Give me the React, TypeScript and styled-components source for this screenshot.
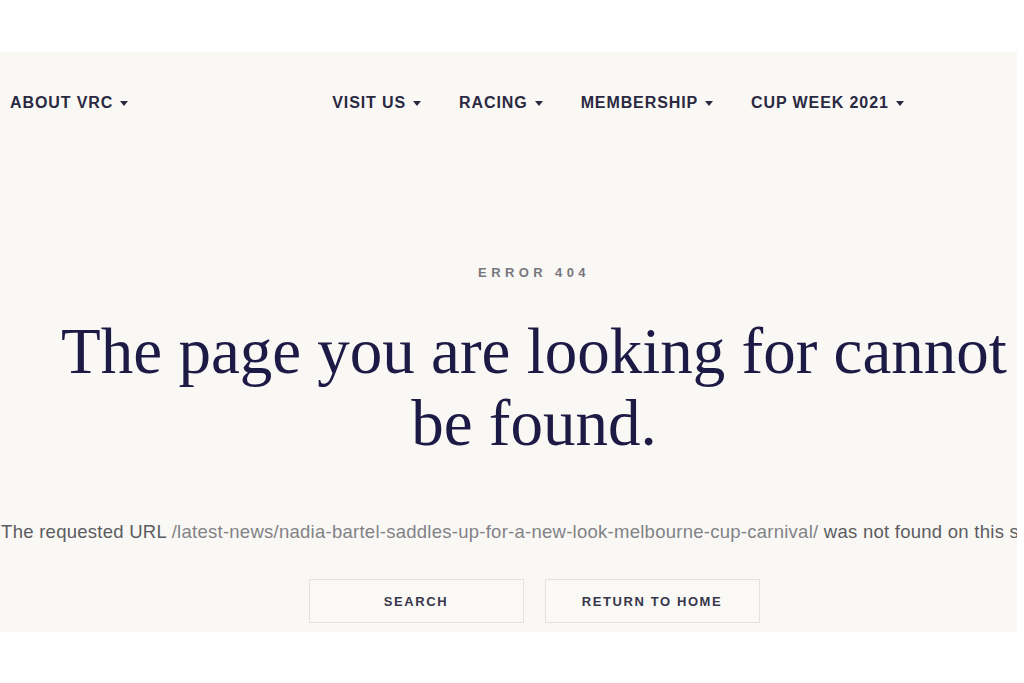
import styled, { createGlobalStyle } from 'styled-components';

const GlobalStyle = createGlobalStyle`
  html, body {
    margin: 0;
    padding: 0;
    background: #ffffff;
  }
  * {
    box-sizing: border-box;
  }
`;

const Page = styled.div`
  padding-top: 52px;
  height: 683px;
  background: #ffffff;
`;

const Panel = styled.section`
  width: 1017px;
  height: 580px;
  background: #f9f8f4;
  overflow: hidden;
  display: flex;
  flex-direction: column;
`;

const Nav = styled.nav`
  height: 102px;
  display: flex;
  align-items: center;
  padding-left: 10px;
`;

const NavGroup = styled.div`
  display: flex;
  align-items: center;
  gap: 38px;
  margin-left: 204px;
`;

const NavItem = styled.a`
  display: flex;
  align-items: center;
  gap: 7px;
  font-family: 'Liberation Sans', Arial, sans-serif;
  font-weight: 700;
  font-size: 16px;
  letter-spacing: 0.9px;
  color: #2b2942;
  text-decoration: none;
  cursor: pointer;
`;

const Caret = styled.span`
  width: 0;
  height: 0;
  border-left: 4px solid transparent;
  border-right: 4px solid transparent;
  border-top: 5px solid #2b2942;
  margin-top: 1px;
`;

const Main = styled.main`
  display: flex;
  flex-direction: column;
  align-items: center;
  padding-left: 51px;
`;

const Eyebrow = styled.div`
  margin-top: 111px;
  font-family: 'Liberation Sans', Arial, sans-serif;
  font-weight: 700;
  font-size: 13px;
  line-height: 16px;
  letter-spacing: 4.4px;
  color: #78777f;
`;

const Headline = styled.h1`
  margin: 34px 0 0;
  font-family: 'Liberation Serif', 'Times New Roman', serif;
  font-weight: 400;
  font-size: 65px;
  line-height: 72px;
  text-align: center;
  color: #1d1a46;
  white-space: nowrap;
`;

const UrlRow = styled.div`
  margin-top: 61px;
  width: 100%;
  display: flex;
  justify-content: center;
`;

const UrlText = styled.p`
  margin: 0;
  flex-shrink: 0;
  white-space: nowrap;
  font-family: 'Liberation Sans', Arial, sans-serif;
  font-size: 18.5px;
  letter-spacing: 0.26px;
  line-height: 24px;
  color: #5c5c5f;
`;

const UrlPath = styled.span`
  color: #828287;
`;

const Actions = styled.div`
  margin-top: 35px;
  display: flex;
  gap: 21px;
`;

const ActionButton = styled.button`
  width: 215px;
  height: 44px;
  padding-top: 2px;
  background: #faf9f6;
  border: 1px solid #e4e2dd;
  font-family: 'Liberation Sans', Arial, sans-serif;
  font-weight: 700;
  font-size: 13px;
  letter-spacing: 1.6px;
  color: #38364a;
  cursor: pointer;
`;

const navLinks = ['VISIT US', 'RACING', 'MEMBERSHIP', 'CUP WEEK 2021'];

const App = () => {
  return (
    <>
      <GlobalStyle />
      <Page>
        <Panel>
          <Nav>
            <NavItem>
              ABOUT VRC <Caret />
            </NavItem>
            <NavGroup>
              {navLinks.map((label) => (
                <NavItem key={label}>
                  {label} <Caret />
                </NavItem>
              ))}
            </NavGroup>
          </Nav>
          <Main>
            <Eyebrow>ERROR 404</Eyebrow>
            <Headline>
              The page you are looking for cannot
              <br />
              be found.
            </Headline>
            <UrlRow>
              <UrlText>
                The requested URL{' '}
                <UrlPath>/latest-news/nadia-bartel-saddles-up-for-a-new-look-melbourne-cup-carnival/</UrlPath>{' '}
                was not found on this server.
              </UrlText>
            </UrlRow>
            <Actions>
              <ActionButton>SEARCH</ActionButton>
              <ActionButton>RETURN TO HOME</ActionButton>
            </Actions>
          </Main>
        </Panel>
      </Page>
    </>
  );
};

export default App;
